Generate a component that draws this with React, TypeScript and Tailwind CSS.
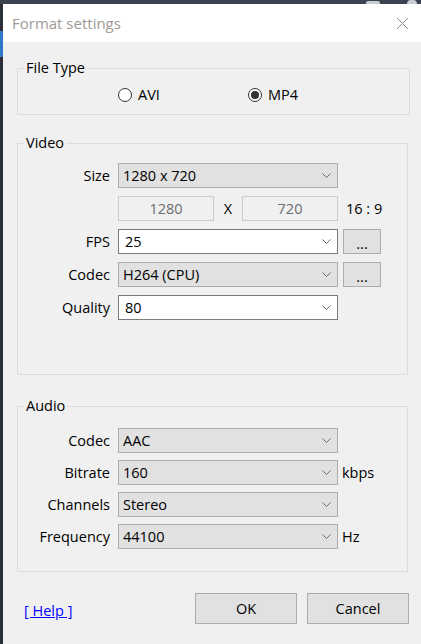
import React from "react";

const FONT = "font-['Segoe_UI','Open_Sans','Noto_Sans',sans-serif]";

function Chevron() {
  return (
    <svg width="9" height="5" viewBox="0 0 9 5" className="shrink-0">
      <path d="M0.5 0.5 L4.5 4.5 L8.5 0.5" fill="none" stroke="#6a6a6a" strokeWidth="1" />
    </svg>
  );
}

function Combo({ value, white }: { value: string; white?: boolean }) {
  return (
    <div
      className={`flex h-[25px] w-[220px] shrink-0 items-center justify-between border pr-[6px] ${
        white ? "border-[#7a7a7a] bg-white pl-[6px]" : "border-[#adadad] bg-[#e1e1e1] pl-[4px]"
      }`}
    >
      <span>{value}</span>
      <Chevron />
    </div>
  );
}

function Row({ label, children }: { label: string; children: React.ReactNode }) {
  return (
    <div className="flex h-[25px] items-center">
      <span className="w-[92px] shrink-0 text-right">{label}</span>
      <div className="ml-[8px] flex items-center">{children}</div>
    </div>
  );
}

function DotsBtn() {
  return (
    <div className="ml-[5px] flex h-[25px] w-[38px] items-center justify-center border border-[#adadad] bg-[#e1e1e1] leading-none">
      <span className="pt-[5px]">...</span>
    </div>
  );
}

function Radio({ label, checked }: { label: string; checked?: boolean }) {
  return (
    <div className="flex w-[130px] items-center">
      <span className="flex h-[14px] w-[14px] items-center justify-center rounded-full border border-[#333333] bg-white">
        {checked && <span className="h-[8px] w-[8px] rounded-full bg-[#333333]" />}
      </span>
      <span className="ml-[6px]">{label}</span>
    </div>
  );
}

function Legend({ children }: { children: React.ReactNode }) {
  return <legend className="ml-[6px] px-[2px] leading-[20px]">{children}</legend>;
}

export default function App() {
  return (
    <div className={`flex h-[644px] w-[421px] flex-col bg-[#3b4350] text-[14.5px] text-black ${FONT}`}>
      {/* desktop strip behind the dialog */}
      <div className="flex h-[4px] shrink-0 items-end">
        <div className="ml-[366px] h-[3px] w-[14px] rounded-t-[2px] bg-[#c9ccd1]" />
        <div className="ml-[27px] h-[4px] w-[10px] rounded-t-[4px] bg-[#c9ccd1]" />
      </div>
      <div className="flex flex-1">
        <div className="flex w-[3px] shrink-0 flex-col bg-[#2b2f36]">
          <div className="h-[27px]" />
          <div className="h-[26px] bg-[#2f78c8]" />
        </div>
        <div className="flex flex-1 flex-col">
          {/* title bar */}
          <div className="flex h-[38px] shrink-0 items-center justify-between bg-white pl-[9px] pr-[12px]">
            <span className="text-[15px] text-[#a09a94]">Format settings</span>
            <svg width="13" height="13" viewBox="0 0 13 13">
              <path d="M1 1 L12 12 M12 1 L1 12" stroke="#8a8a8a" strokeWidth="1" />
            </svg>
          </div>

          {/* body */}
          <div className="flex flex-1 flex-col bg-[#f0f0f0]">
            <fieldset className="ml-[14px] mt-[16px] w-[393px] border border-[#dcdcdc] px-0 pb-[8px] pt-[6px]">
              <Legend>File Type</Legend>
              <div className="flex h-[22px] items-center pl-[100px]">
                <Radio label="AVI" />
                <Radio label="MP4" checked />
              </div>
            </fieldset>

            <fieldset className="ml-[14px] mt-[18px] w-[391px] border border-[#dcdcdc] px-0 pb-[54px] pt-[10px]">
              <Legend>Video</Legend>
              <div className="flex flex-col gap-[8px]">
                <Row label="Size">
                  <Combo value="1280 x 720" />
                </Row>
                <Row label="">
                  <div className="flex h-[25px] w-[96px] items-center justify-center border border-[#cccccc] bg-[#f0f0f0] text-[#6d6d6d]">
                    1280
                  </div>
                  <span className="w-[28px] text-center">X</span>
                  <div className="flex h-[25px] w-[96px] items-center justify-center border border-[#cccccc] bg-[#f0f0f0] text-[#6d6d6d]">
                    720
                  </div>
                  <span className="ml-[8px]">16 : 9</span>
                </Row>
                <Row label="FPS">
                  <Combo value="25" white />
                  <DotsBtn />
                </Row>
                <Row label="Codec">
                  <Combo value="H264 (CPU)" />
                  <DotsBtn />
                </Row>
                <Row label="Quality">
                  <Combo value="80" white />
                </Row>
              </div>
            </fieldset>

            <fieldset className="ml-[14px] mt-[21px] w-[391px] border border-[#dcdcdc] px-0 pb-[22px] pt-[12px]">
              <Legend>Audio</Legend>
              <div className="flex flex-col gap-[7px]">
                <Row label="Codec">
                  <Combo value="AAC" />
                </Row>
                <Row label="Bitrate">
                  <Combo value="160" />
                  <span className="ml-[4px]">kbps</span>
                </Row>
                <Row label="Channels">
                  <Combo value="Stereo" />
                </Row>
                <Row label="Frequency">
                  <Combo value="44100" />
                  <span className="ml-[4px]">Hz</span>
                </Row>
              </div>
            </fieldset>

            <div className="mt-[21px] flex items-center pl-[21px] pr-[12px]">
              <a href="#" className="pt-[5px] text-[#0000ff] underline">
                [ Help ]
              </a>
              <div className="ml-auto flex gap-[10px]">
                <button className="h-[31px] w-[102px] border border-[#adadad] bg-[#e1e1e1]">OK</button>
                <button className="h-[31px] w-[102px] border border-[#adadad] bg-[#e1e1e1]">Cancel</button>
              </div>
            </div>
          </div>
        </div>
      </div>
    </div>
  );
}
